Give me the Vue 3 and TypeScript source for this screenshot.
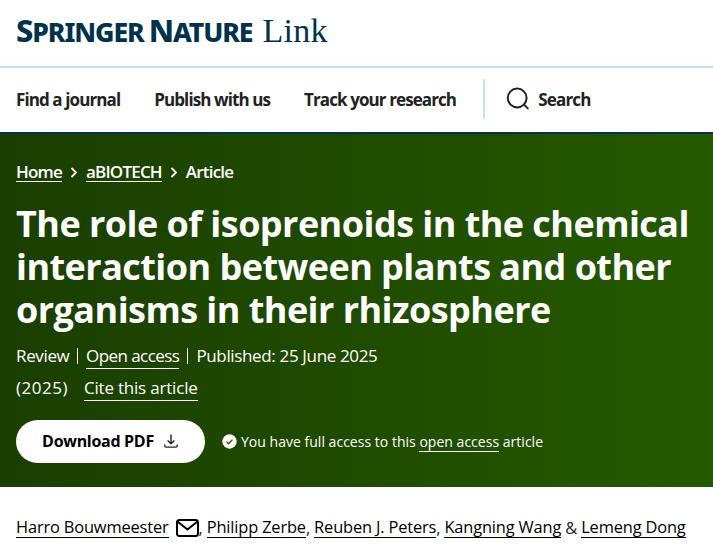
<script setup lang="ts">
const navItems: string[] = ['Find a journal', 'Publish with us', 'Track your research']
</script>

<template>
  <div class="page">
    <header class="brand">
      <span class="wordmark"><b class="cap">S</b>PRINGER<b class="cap gap">N</b>ATURE</span>
      <span class="link-word">Link</span>
    </header>
    <nav class="nav">
      <a v-for="item in navItems" :key="item" class="nav-item">{{ item }}</a>
      <span class="divider"></span>
      <a class="search">
        <svg width="24" height="24" viewBox="0 0 24 24" fill="none" stroke="#222" stroke-width="2">
          <circle cx="11.2" cy="11" r="9.4" />
          <path d="M18 17.6l3.8 3.8" stroke-linecap="round" />
        </svg>
        Search
      </a>
    </nav>
    <section class="hero">
      <div class="crumbs">
        <a class="crumb-link">Home</a>
        <svg class="chev" width="8" height="11" viewBox="0 0 8 11" fill="none" stroke="#fff" stroke-width="1.8"><path d="M1.5 1l4.5 4.5L1.5 10" /></svg>
        <a class="crumb-link">aBIOTECH</a>
        <svg class="chev" width="8" height="11" viewBox="0 0 8 11" fill="none" stroke="#fff" stroke-width="1.8"><path d="M1.5 1l4.5 4.5L1.5 10" /></svg>
        <span>Article</span>
      </div>
      <h1 class="title">The role of isoprenoids in the chemical interaction between plants and other organisms in their rhizosphere</h1>
      <div class="meta">
        <span class="meta-item">Review</span>
        <span class="meta-item"><a class="u">Open access</a></span>
        <span class="meta-item">Published: 25 June 2025</span>
      </div>
      <div class="meta second">
        <span class="year">(2025)</span>
        <a class="u cite">Cite this article</a>
      </div>
      <div class="actions">
        <a class="pdf">
          Download PDF
          <svg width="16" height="16" viewBox="0 0 16 16" fill="none" stroke="#222" stroke-width="1.4">
            <path d="M8 1.5v9M4.6 7.4L8 10.8l3.4-3.4M1.8 11.5v1.2c0 .8.6 1.4 1.4 1.4h9.6c.8 0 1.4-.6 1.4-1.4v-1.2" />
          </svg>
        </a>
        <span class="access">
          <svg width="15" height="15" viewBox="0 0 15 15">
            <circle cx="7.5" cy="7.5" r="7.2" fill="#fff" />
            <path d="M4.6 7.8l2 2 3.8-4.2" fill="none" stroke="#265c00" stroke-width="1.4" />
          </svg>
          <span>You have full access to this <a class="u">open access</a> article</span>
        </span>
      </div>
    </section>
    <div class="authors">
      <a class="au">Harro Bouwmeester</a>
      <svg class="mail" width="23" height="18" viewBox="0 0 23 18" fill="none" stroke="#000" stroke-width="2">
        <rect x="1" y="1" width="21" height="16" rx="2.5" />
        <path d="M1.5 2.5l10 8 10-8" />
      </svg><span>,&nbsp;</span><a class="au">Philipp Zerbe</a><span>,&nbsp;</span><a class="au">Reuben J. Peters</a><span>,&nbsp;</span><a class="au">Kangning Wang</a><span class="amp">&nbsp;&amp;&nbsp;</span><a class="au">Lemeng Dong</a>
    </div>
  </div>
</template>

<style>
html, body { margin: 0; background: #fff; }
</style>

<style scoped>
.page {
  width: 713px;
  height: 548px;
  overflow: hidden;
  font-family: "Open Sans", "Noto Sans", sans-serif;
  color: #222;
}
.brand {
  height: 66px;
  box-sizing: border-box;
  padding: 0 16px;
  display: flex;
  align-items: baseline;
  gap: 10px;
  line-height: 60px;
}
.wordmark {
  font-family: "Noto Sans", sans-serif;
  font-weight: 800;
  font-size: 26.6px;
  letter-spacing: -1.1px;
  color: #01324b;
}
.cap { font-size: 30.8px; font-weight: 800; }
.gap { margin-left: 5px; }
.link-word {
  font-family: "Liberation Serif", serif;
  font-size: 34px;
  color: #01324b;
  letter-spacing: 0.3px;
}
.nav {
  height: 62px;
  padding: 0 16px 2px;
  border-top: 2px solid #c5e0f4;
  border-bottom: 2px solid #01324b;
  display: flex;
  align-items: center;
}
.nav-item {
  font-weight: 700;
  font-size: 17px;
  letter-spacing: -0.9px;
  margin-right: 34px;
  color: #222;
}
.divider {
  width: 2px;
  height: 40px;
  background: #c5e0f4;
  margin-left: -7px;
  margin-right: 21px;
}
.search {
  display: flex;
  align-items: center;
  gap: 8px;
  font-weight: 700;
  font-size: 17px;
  letter-spacing: -0.8px;
}
.hero {
  height: 353px;
  box-sizing: border-box;
  padding: 26px 16px 0;
  background: linear-gradient(90deg, #1a3e00 0%, #255900 100%);
  color: #fff;
}
.crumbs {
  display: flex;
  align-items: center;
  gap: 8px;
  font-size: 17px;
  line-height: 24px;
  font-weight: 600;
  letter-spacing: -0.8px;
}
.crumb-link { border-bottom: 1px solid #fff; line-height: 19px; }
.title {
  margin: 18px 0 0;
  font-size: 36px;
  line-height: 43.2px;
  font-weight: 700;
  letter-spacing: -0.55px;
}
.meta {
  margin-top: 16px;
  display: flex;
  align-items: center;
  font-size: 17px;
  line-height: 24px;
  letter-spacing: -0.35px;
}
.meta-item { padding: 0 8px; border-left: 1px solid #fff; line-height: 16px; }
.meta-item:first-child { padding-left: 0; padding-right: 7.5px; border-left: 0; }
.second { gap: 16px; margin-top: 12px; }
.year { letter-spacing: 0.5px; }
.u { border-bottom: 1px solid #fff; }
.meta-item .u { padding-bottom: 1px; letter-spacing: -0.55px; }
.cite { letter-spacing: -0.2px; }
.actions {
  margin-top: 19px;
  display: flex;
  align-items: center;
  gap: 17px;
}
.pdf {
  width: 189px;
  height: 43px;
  border-radius: 22px;
  background: #fff;
  color: #000;
  display: flex;
  align-items: center;
  justify-content: center;
  gap: 9px;
  font-weight: 700;
  font-size: 16px;
  letter-spacing: -0.3px;
}
.access {
  display: flex;
  align-items: center;
  gap: 4px;
  font-size: 14px;
  letter-spacing: 0.02px;
}
.authors {
  padding: 29px 16px 0;
  display: flex;
  align-items: center;
  font-size: 16.4px;
  letter-spacing: -0.15px;
  color: #222;
  white-space: nowrap;
}
.au { color: #000; border-bottom: 1px solid #000; line-height: 20px; }
.mail { margin-left: 7px; }
</style>
